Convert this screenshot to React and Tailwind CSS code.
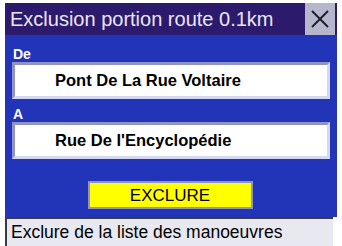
import React from 'react';

const Field = ({ value }) => (
  <div className="mx-[7px] h-[37px] flex items-center bg-white border-[3px] border-t-[#8e94c4] border-l-[#8e94c4] border-r-[#d4d8f2] border-b-[#d4d8f2] pl-[40px]">
    <span className="text-[16.5px] font-bold text-black leading-none">{value}</span>
  </div>
);

export default function App() {
  return (
    <div
      className="w-[342px] h-[246px] bg-white pt-[3px] px-[5px] flex flex-col overflow-hidden"
      style={{ fontFamily: '"Liberation Sans", Arial, sans-serif' }}
    >
      {/* Title bar */}
      <div className="h-[32px] flex bg-[#2c1a6c]">
        <div className="flex-1 flex items-center pl-[5px] text-[20px] text-[#ece6f4] leading-none">
          Exclusion portion route 0.1km
        </div>
        <div className="w-[30px] flex items-center justify-center bg-[#b6b6cc] mr-[2px]">
          <svg width="20" height="20" viewBox="0 0 20 20">
            <path d="M2 2 L18 18 M18 2 L2 18" stroke="#1a1a2a" strokeWidth="1.8" fill="none" />
          </svg>
        </div>
      </div>

      {/* Body */}
      <div className="h-[182px] bg-[#2234b8] flex flex-col pt-[12px]">
        <div className="pl-[8px] h-[15px] text-[14px] font-bold text-white leading-none">De</div>
        <Field value="Pont De La Rue Voltaire" />
        <div className="pl-[8px] mt-[6px] h-[17px] text-[14px] font-bold text-white leading-none flex items-center">A</div>
        <Field value="Rue De l'Encyclopédie" />
        <div className="flex justify-center mt-[22px] pr-[2px]">
          <div className="w-[165px] h-[28px] bg-[#ffff00] border-[2px] border-[#8f93c9] flex items-center justify-center text-[17px] text-black leading-none">
            EXCLURE
          </div>
        </div>
      </div>

      {/* Status bar */}
      <div className="flex-1 bg-[#e8e8f0] border-t-[2px] border-l-[2px] border-t-[#3a3a48] border-l-[#3a3a48] mr-[4px] flex items-center pl-[4px] text-[17.5px] text-black leading-none">
        Exclure de la liste des manoeuvres
      </div>
    </div>
  );
}
